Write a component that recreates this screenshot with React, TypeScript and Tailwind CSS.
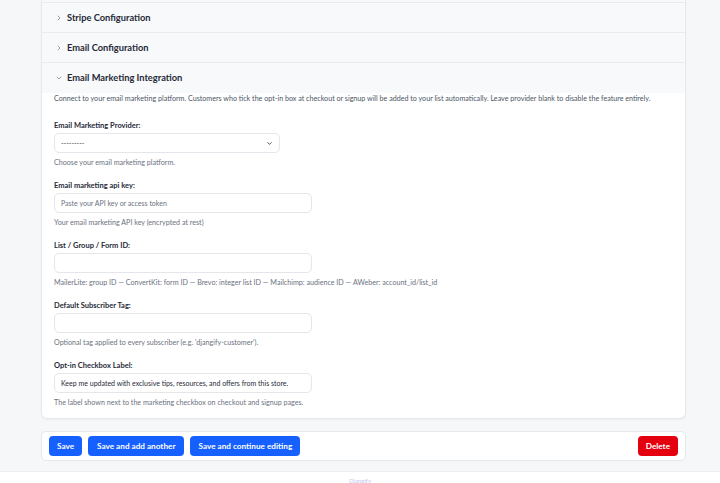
import React from "react";
import { ChevronRight, ChevronDown } from "lucide-react";

const fields = [
  { label: "List / Group / Form ID:", help: "MailerLite: group ID — ConvertKit: form ID — Brevo: integer list ID — Mailchimp: audience ID — AWeber: account_id/list_id" },
  { label: "Default Subscriber Tag:", help: "Optional tag applied to every subscriber (e.g. 'djangify-customer')." },
];

function Collapsed({ title }: { title: string }) {
  return (
    <div className="flex items-center gap-[4px] h-[30px] pl-[13px] bg-[#f8f9fb] border-b border-[#e9ebef]">
      <ChevronRight className="w-[8px] h-[8px] text-[#6b7280]" strokeWidth={2} />
      <span className="text-[9.3px] font-bold text-[#1f2937]">{title}</span>
    </div>
  );
}

function Field({ label, help, children }: { label: string; help: string; children: React.ReactNode }) {
  return (
    <div className="flex flex-col">
      <label className="text-[7.5px] font-bold text-[#1f2937] leading-[10px]">{label}</label>
      <div className="mt-[2px]">{children}</div>
      <p className="mt-[5px] text-[7.15px] text-[#6b7280] leading-[10px]">{help}</p>
    </div>
  );
}

export default function App() {
  return (
    <div className="min-h-screen bg-[#f6f7f9] flex flex-col" style={{ fontFamily: 'Lato, "Noto Sans", sans-serif' }}>
      <div className="pl-[41px] pr-[34px]">
        <div className="bg-white border-x border-b border-[#e6e8ec] rounded-b-[6px] shadow-[0_1px_2px_rgba(0,0,0,0.04)]">
          <div className="h-[3px] bg-[#f8f9fb] border-b border-[#e9ebef]" />
          <Collapsed title="Stripe Configuration" />
          <Collapsed title="Email Configuration" />
          <div className="flex items-center gap-[4px] h-[30px] pl-[13px] bg-[#f8f9fb]">
            <ChevronDown className="w-[8px] h-[8px] text-[#6b7280]" strokeWidth={2} />
            <span className="text-[9.3px] font-bold text-[#1f2937]">Email Marketing Integration</span>
          </div>
          <div className="px-[12px] pt-[1px] pb-[10px]">
            <p className="text-[7.15px] text-[#4b5563] leading-[10px] whitespace-nowrap">
              Connect to your email marketing platform. Customers who tick the opt-in box at checkout or signup will be added to your list automatically. Leave provider blank to disable the feature entirely.
            </p>
            <div className="mt-[17px] flex flex-col gap-[13px]">
              <Field label="Email Marketing Provider:" help="Choose your email marketing platform.">
                <div className="w-[226px] h-[20px] border border-[#e3e6ea] rounded-[5px] flex items-center justify-between pl-[6px] pr-[6px]">
                  <span className="text-[7px] text-[#374151]">---------</span>
                  <ChevronDown className="w-[7px] h-[7px] text-[#374151]" strokeWidth={3} />
                </div>
              </Field>
              <Field label="Email marketing api key:" help="Your email marketing API key (encrypted at rest)">
                <div className="w-[258px] h-[20px] border border-[#e3e6ea] rounded-[5px] flex items-center pl-[6px]">
                  <span className="text-[7px] text-[#6b7280]">Paste your API key or access token</span>
                </div>
              </Field>
              {fields.map((f) => (
                <Field key={f.label} label={f.label} help={f.help}>
                  <div className="w-[258px] h-[20px] border border-[#e3e6ea] rounded-[5px]" />
                </Field>
              ))}
              <Field label="Opt-in Checkbox Label:" help="The label shown next to the marketing checkbox on checkout and signup pages.">
                <div className="w-[258px] h-[20px] border border-[#e3e6ea] rounded-[5px] flex items-center pl-[6px]">
                  <span className="text-[7px] text-[#1f2937] whitespace-nowrap">Keep me updated with exclusive tips, resources, and offers from this store.</span>
                </div>
              </Field>
            </div>
          </div>
        </div>

        <div className="mt-[12px] bg-white border border-[#e6e8ec] rounded-[5px] h-[30px] flex items-center justify-between px-[7px]">
          <div className="flex items-center gap-[6px]">
            <button className="h-[20px] px-[8px] rounded-[4px] bg-[#1560ff] text-white text-[8.2px] font-bold">Save</button>
            <button className="h-[20px] px-[9px] rounded-[4px] bg-[#1560ff] text-white text-[8.2px] font-bold">Save and add another</button>
            <button className="h-[20px] px-[8px] rounded-[4px] bg-[#1560ff] text-white text-[8.2px] font-bold">Save and continue editing</button>
          </div>
          <button className="h-[20px] px-[8px] rounded-[4px] bg-[#e4000f] text-white text-[8.2px] font-bold">Delete</button>
        </div>
      </div>
      <div className="mt-[10px] flex-1 bg-white border-t border-[#ebedf0] flex justify-center pt-[5px]">
        <span className="text-[6px] leading-[8px] text-[#c4c8f0]">Djangify</span>
      </div>
    </div>
  );
}
